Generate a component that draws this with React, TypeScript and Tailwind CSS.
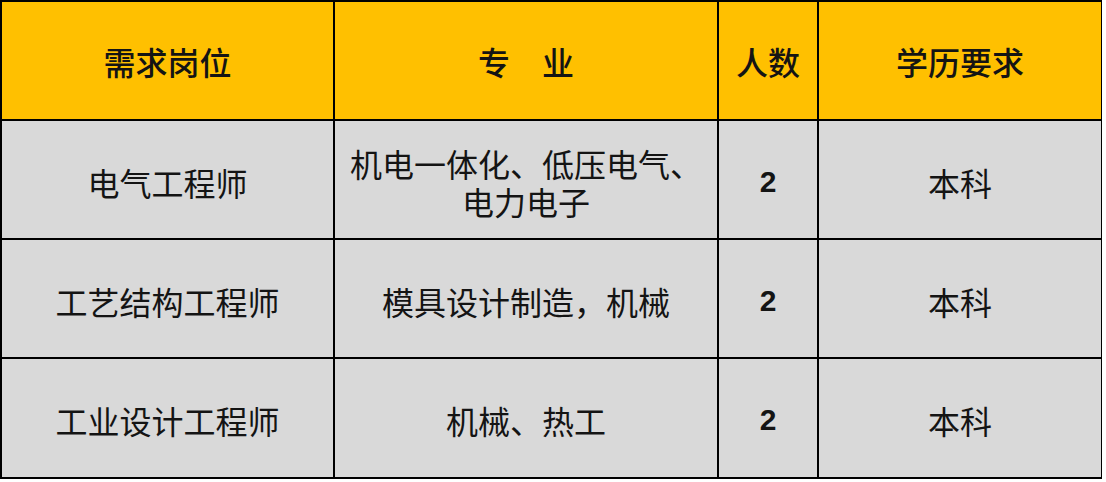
import { Fragment } from 'react'

const font = { fontFamily: '"Noto Sans CJK SC", "Noto Sans", sans-serif' }

const rows = [
  { title: '电气工程师', major: ['机电一体化、低压电气、', '电力电子'], count: '2', edu: '本科' },
  { title: '工艺结构工程师', major: ['模具设计制造，机械'], count: '2', edu: '本科' },
  { title: '工业设计工程师', major: ['机械、热工'], count: '2', edu: '本科' },
]

function Cell({ children, head }: { children: React.ReactNode; head?: boolean }) {
  return (
    <div
      className={
        head
          ? 'flex items-center justify-center bg-[#ffc000] text-[32px] font-medium text-[#141414]'
          : 'flex items-center justify-center bg-[#d9d9d9] pt-[4px] text-center text-[32px] leading-[38px] text-[#141414]'
      }
    >
      {children}
    </div>
  )
}

export default function App() {
  return (
    <div className="min-h-[482px] w-[1106px] bg-white" style={font}>
      <div className="grid w-[1102px] grid-cols-[331px_382px_98px_282px] grid-rows-[117px_117px_117px_118px] gap-[2px] bg-black p-[2px]">
        <Cell head>需求岗位</Cell>
        <Cell head>专　业</Cell>
        <Cell head>人数</Cell>
        <Cell head>学历要求</Cell>

        {rows.map((r) => (
          <Fragment key={r.title}>
            <Cell>{r.title}</Cell>
            <Cell>
              <div>
                {r.major.map((line) => (
                  <div key={line}>{line}</div>
                ))}
              </div>
            </Cell>
            <Cell>
              <span className="font-['Liberation_Sans'] text-[30px] font-semibold">{r.count}</span>
            </Cell>
            <Cell>{r.edu}</Cell>
          </Fragment>
        ))}
      </div>
    </div>
  )
}
